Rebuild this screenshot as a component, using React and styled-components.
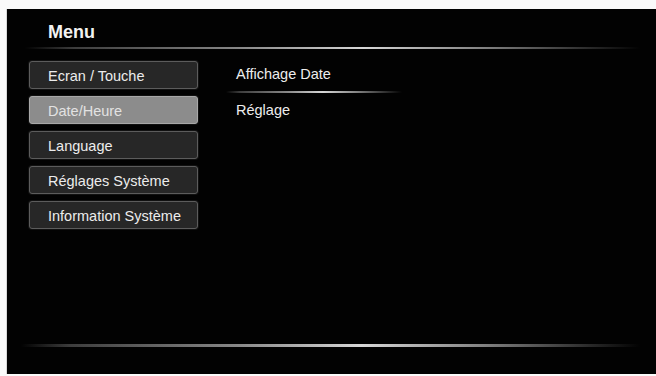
import React from 'react';
import styled, { createGlobalStyle } from 'styled-components';

const GlobalStyle = createGlobalStyle`
  html, body {
    margin: 0;
    padding: 0;
    background: #ffffff;
  }
  body {
    font-family: "Liberation Sans", Arial, sans-serif;
  }
`;

const Page = styled.div`
  width: 656px;
  height: 376px;
  padding: 9px 0 2px 6px;
  box-sizing: border-box;
  background: #fafafa;
`;

const Screen = styled.div`
  height: 100%;
  background: #020202;
  border-left: 1px solid #d8d8d8;
  display: flex;
  flex-direction: column;
  box-sizing: border-box;
`;

const Header = styled.div`
  padding: 13px 0 0 41px;
  height: 38px;
  box-sizing: border-box;
`;

const Title = styled.h1`
  margin: 0;
  font-size: 18px;
  line-height: 21px;
  font-weight: bold;
  color: #f2f2f2;
`;

const Glow = styled.div`
  height: ${p => p.$h || 2}px;
  margin: ${p => p.$m};
  background: linear-gradient(
    to right,
    rgba(120, 120, 120, 0) 0%,
    rgba(120, 120, 120, 0.5) 8%,
    rgba(170, 170, 170, 0.8) 35%,
    rgba(215, 215, 215, 1) 55%,
    rgba(160, 160, 160, 0.8) 75%,
    rgba(100, 100, 100, 0.4) 92%,
    rgba(80, 80, 80, 0) 100%
  );
`;

const Body = styled.div`
  flex: 1;
  display: flex;
  padding: 12px 0 0 22px;
`;

const Menu = styled.div`
  width: 169px;
  display: flex;
  flex-direction: column;
  gap: 7px;
`;

const MenuButton = styled.div`
  height: 28px;
  box-sizing: border-box;
  border-radius: 3px;
  border: 1px solid ${p => (p.$active ? '#a8a8a8' : '#5c5c5c')};
  box-shadow: 0 0 0 1px #111;
  background: ${p => (p.$active ? '#8c8c8c' : '#272727')};
  color: ${p => (p.$active ? '#e2e2e2' : '#ececec')};
  font-size: 14.5px;
  display: flex;
  align-items: center;
  padding-left: 18px;
  padding-top: 1px;
  white-space: nowrap;
`;

const Detail = styled.div`
  width: 176px;
  margin-left: 28px;
  margin-top: -1px;
  display: flex;
  flex-direction: column;
`;

const DetailItem = styled.div`
  height: 28px;
  display: flex;
  align-items: center;
  padding-left: 10px;
  font-size: 14.5px;
  color: #ededed;
`;

const Footer = styled.div`
  padding: 0 16px 27px 14px;
`;

const items = [
  'Ecran / Touche',
  'Date/Heure',
  'Language',
  'Réglages Système',
  'Information Système',
];

export default function App() {
  return (
    <>
      <GlobalStyle />
      <Page>
        <Screen>
          <Header>
            <Title>Menu</Title>
          </Header>
          <Glow $h={2} $m="0 16px 0 18px" />
          <Body>
            <Menu>
              {items.map((label, i) => (
                <MenuButton key={label} $active={i === 1}>
                  {label}
                </MenuButton>
              ))}
            </Menu>
            <Detail>
              <DetailItem>Affichage Date</DetailItem>
              <Glow $h={2} $m="3px 0 3px 0" />
              <DetailItem>Réglage</DetailItem>
            </Detail>
          </Body>
          <Footer>
            <Glow $h={3} />
          </Footer>
        </Screen>
      </Page>
    </>
  );
}
